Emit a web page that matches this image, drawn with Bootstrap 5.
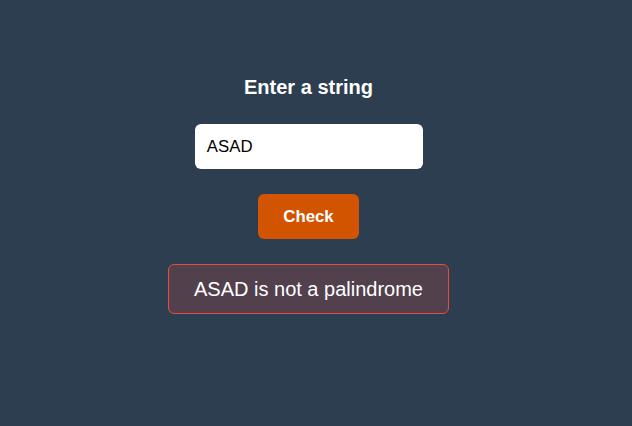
<!DOCTYPE html>
<html lang="en">
<head>
<meta charset="utf-8">
<title>Palindrome checker</title>
<meta name="viewport" content="width=device-width, initial-scale=1">
<link rel="stylesheet" href="https://cdn.jsdelivr.net/npm/bootstrap@5.3.0/dist/css/bootstrap.min.css">
<style>
body { background: #2d3e50; font-family: "Liberation Sans", Arial, sans-serif; font-size: 16px; }
.checker { width: 617px; height: 426px; padding-top: 75px; }
.prompt { font-size: 20px; line-height: 25px; margin-bottom: 24px; }
.field.form-control { width: 228px; height: 45px; padding: 0 11px; text-indent: 1.3px; border: 0; border-radius: 6px; font-size: 16.8px; color: #000; background: #fff; margin-bottom: 25px; }
.check.btn { width: 101px; height: 45px; padding: 0; border: 0; border-radius: 6px; background: #d35400; font-size: 16.8px; margin-bottom: 25px; }
.result { width: 281px; height: 50px; border: 1px solid #e74c3c; border-radius: 6px; background: rgba(231, 76, 60, .2); font-size: 20px; }
</style>
</head>
<body class="overflow-hidden">
<main class="checker d-flex flex-column align-items-center text-white">
  <label for="text" class="prompt fw-bold">Enter a string</label>
  <input id="text" type="text" class="field form-control" value="ASAD">
  <button type="button" class="check btn text-white fw-bold">Check</button>
  <div class="result d-flex align-items-center justify-content-center">ASAD is not a palindrome</div>
</main>
<script src="https://cdn.jsdelivr.net/npm/bootstrap@5.3.0/dist/js/bootstrap.bundle.min.js"></script>
</body>
</html>
